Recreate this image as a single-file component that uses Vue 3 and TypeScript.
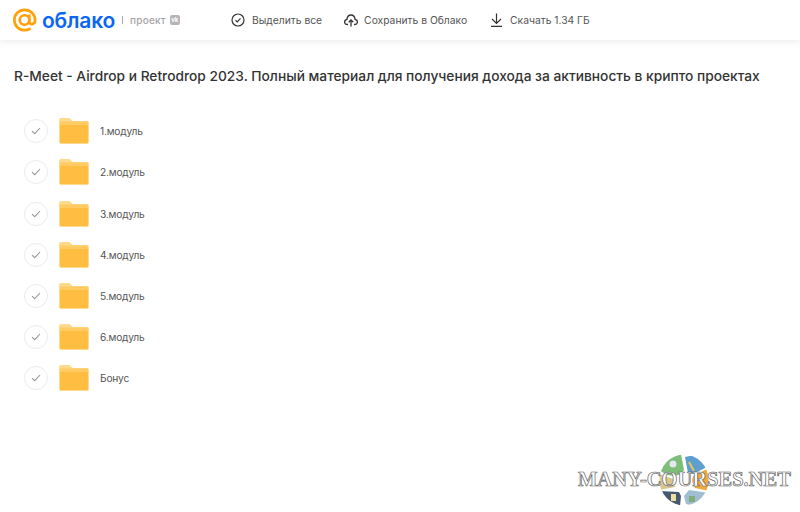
<script setup lang="ts">
const folders = ['1.модуль', '2.модуль', '3.модуль', '4.модуль', '5.модуль', '6.модуль', 'Бонус']
</script>

<template>
  <div class="page">
    <header class="topbar">
      <div class="brand">
        <svg class="at" width="24" height="25" viewBox="0 0 25 25" fill="none" stroke="#ffa10a" stroke-width="2.800">
          <circle cx="12" cy="12" r="5" />
          <path d="M17 7.500v6c0 4.300 6 3.600 6-1.500C23 5.900 18 1.400 12 1.400 6.100 1.400 1.400 6.100 1.400 12S6.100 22.600 12 22.600c2 0 3.700-.5 5.200-1.300" stroke-linecap="round" />
        </svg>
        <span class="logo-text">облако</span>
        <span class="divider"></span>
        <span class="project">проект</span>
        <span class="vk">vk</span>
      </div>
      <nav class="actions">
        <a class="action select">
          <svg width="14" height="14" viewBox="0 0 14 14" fill="none" stroke="#333" stroke-width="1.200">
            <circle cx="7" cy="7" r="6" />
            <path d="M4.500 7.200l1.800 1.700 3.200-3.500" />
          </svg>
          Выделить все
        </a>
        <a class="action save">
          <svg width="14" height="13" viewBox="0 0 14 13" fill="none" stroke="#333" stroke-width="1.300">
            <path d="M4 10.500H3.200C1.700 10.500.6 9.400.6 8c0-1.300 1-2.400 2.300-2.500C3.200 3 4.900 1 7 1s3.800 2 4.100 4.500c1.300.1 2.300 1.200 2.300 2.500 0 1.400-1.100 2.500-2.600 2.500H10" />
            <path d="M7 12.500V6M4.700 8.200L7 5.900l2.300 2.300" />
          </svg>
          Сохранить в Облако
        </a>
        <a class="action download">
          <svg width="13" height="14" viewBox="0 0 13 14" fill="none" stroke="#333" stroke-width="1.200">
            <path d="M6.500 0.500v9.500M2 6l4.500 4.500L11 6M1 13.300h11" />
          </svg>
          Скачать 1.34 ГБ
        </a>
      </nav>
    </header>

    <h1 class="title">R-Meet - Airdrop и Retrodrop 2023. Полный материал для получения дохода за активность в крипто проектах</h1>

    <ul class="list">
      <li v-for="name in folders" :key="name" class="row">
        <span class="check">
          <svg width="10" height="8" viewBox="0 0 10 8" fill="none" stroke="#999" stroke-width="1.100">
            <path d="M1 4.200l2.700 2.500L9 1" />
          </svg>
        </span>
        <svg class="folder" width="30" height="26" viewBox="0 0 30 26">
          <path d="M0 2a2 2 0 0 1 2-2h7.500c1 0 1.500.4 2.200 1.100L13.500 3H28a2 2 0 0 1 2 2v19a2 2 0 0 1-2 2H2a2 2 0 0 1-2-2z" fill="#ffd98c" />
          <path d="M1 3.500h27a1 1 0 0 1 1 1V7H1z" fill="#ffcb62" />
          <path d="M1 7h28v17a1 1 0 0 1-1 1H2a1 1 0 0 1-1-1z" fill="#ffbd42" />
        </svg>
        <span class="name">{{ name }}</span>
      </li>
    </ul>

    <div class="watermark">
      <svg class="globe" width="50" height="52" viewBox="0 0 50 52">
        <defs>
          <clipPath id="globe-clip">
            <ellipse cx="25" cy="26" rx="24.500" ry="25.500" />
          </clipPath>
        </defs>
        <g clip-path="url(#globe-clip)">
          <path d="M22 0L0 6v10l8 5 8 1 6-2 3-4z" fill="#7fbd7a" />
          <path d="M26 3L40 0l10 12-16 8-5-1z" fill="#5f9fd0" />
          <circle cx="14" cy="10" r="3.500" fill="#dfe9ee" />
          <path d="M30 8l5 9" stroke="#e8c65a" stroke-width="2" />
          <path d="M34 22l14-7 2 10v12l-14-3-3-7z" fill="#f2a93b" />
          <path d="M0 20l14 5 2 8-16 3z" fill="#d9c68c" />
          <path d="M30 36l20 3-14 13-9-2-2-8z" fill="#a0bed2" />
          <path d="M30 42h6v6h-6z" fill="#7fae7a" />
          <path d="M0 37l20 1 2 4-1 10H8z" fill="#465870" />
          <path d="M12 40h5v7h-5z" fill="#ecdf9c" />
        </g>
      </svg>
      <span class="wm-text">MANY-COURSES.NET</span>
    </div>
  </div>
</template>

<style scoped>
.page {
  position: relative;
  width: 800px;
  height: 512px;
  overflow: hidden;
  background: #fff;
  font-family: Inter, "Liberation Sans", sans-serif;
  color: #333;
}

.topbar {
  display: flex;
  align-items: center;
  height: 40px;
  padding-left: 13px;
  box-shadow: 0 1px 8px rgba(0, 0, 0, 0.09);
}

.brand {
  display: flex;
  align-items: center;
  width: 218px;
}

.at {
  margin-right: 5px;
}

.logo-text {
  font-size: 21px;
  font-weight: 600;
  color: #0b66f5;
  letter-spacing: -0.2px;
}

.divider {
  width: 1px;
  height: 8px;
  margin: 0 7px;
  background: #aaa;
}

.project {
  font-size: 10px;
  font-weight: 500;
  color: #a5a5a5;
  letter-spacing: 0.2px;
}

.vk {
  width: 10px;
  height: 10px;
  margin-left: 4px;
  border-radius: 2px;
  background: #b5b5b5;
  color: #fff;
  font-size: 6px;
  font-weight: 700;
  line-height: 10px;
  text-align: center;
}

.actions {
  display: flex;
  align-items: center;
  gap: 22px;
}

.action {
  display: flex;
  align-items: center;
  gap: 7px;
  font-size: 10.300px;
  color: #555;
}

.save {
  margin-left: 0;
}

.save svg {
  margin-right: -1px;
}

.download {
  margin-left: 1px;
}

.title {
  margin: 26px 0 0 14px;
  font-size: 13.760px;
  font-weight: 500;
  line-height: 20px;
  color: #333;
  white-space: nowrap;
}

.list {
  list-style: none;
  margin: 24.700px 0 0;
  padding: 0 0 0 24px;
}

.row {
  display: flex;
  align-items: center;
  height: 41.150px;
}

.check {
  display: flex;
  align-items: center;
  justify-content: center;
  width: 24px;
  height: 24px;
  box-sizing: border-box;
  border: 1px solid #ececec;
  border-radius: 50%;
}

.folder {
  margin-left: 11px;
}

.name {
  margin-left: 11px;
  font-size: 10.200px;
  letter-spacing: -0.200px;
  color: #555;
}

.watermark {
  position: absolute;
  left: 578px;
  top: 454px;
  width: 222px;
  height: 52px;
}

.globe {
  position: absolute;
  left: 81px;
  top: 0;
}

.wm-text {
  position: absolute;
  left: 0;
  top: 14px;
  font-family: "Liberation Serif", serif;
  font-size: 20.500px;
  font-weight: 700;
  color: #fff;
  white-space: nowrap;
  -webkit-text-stroke: 0.7px #666;
}
</style>
